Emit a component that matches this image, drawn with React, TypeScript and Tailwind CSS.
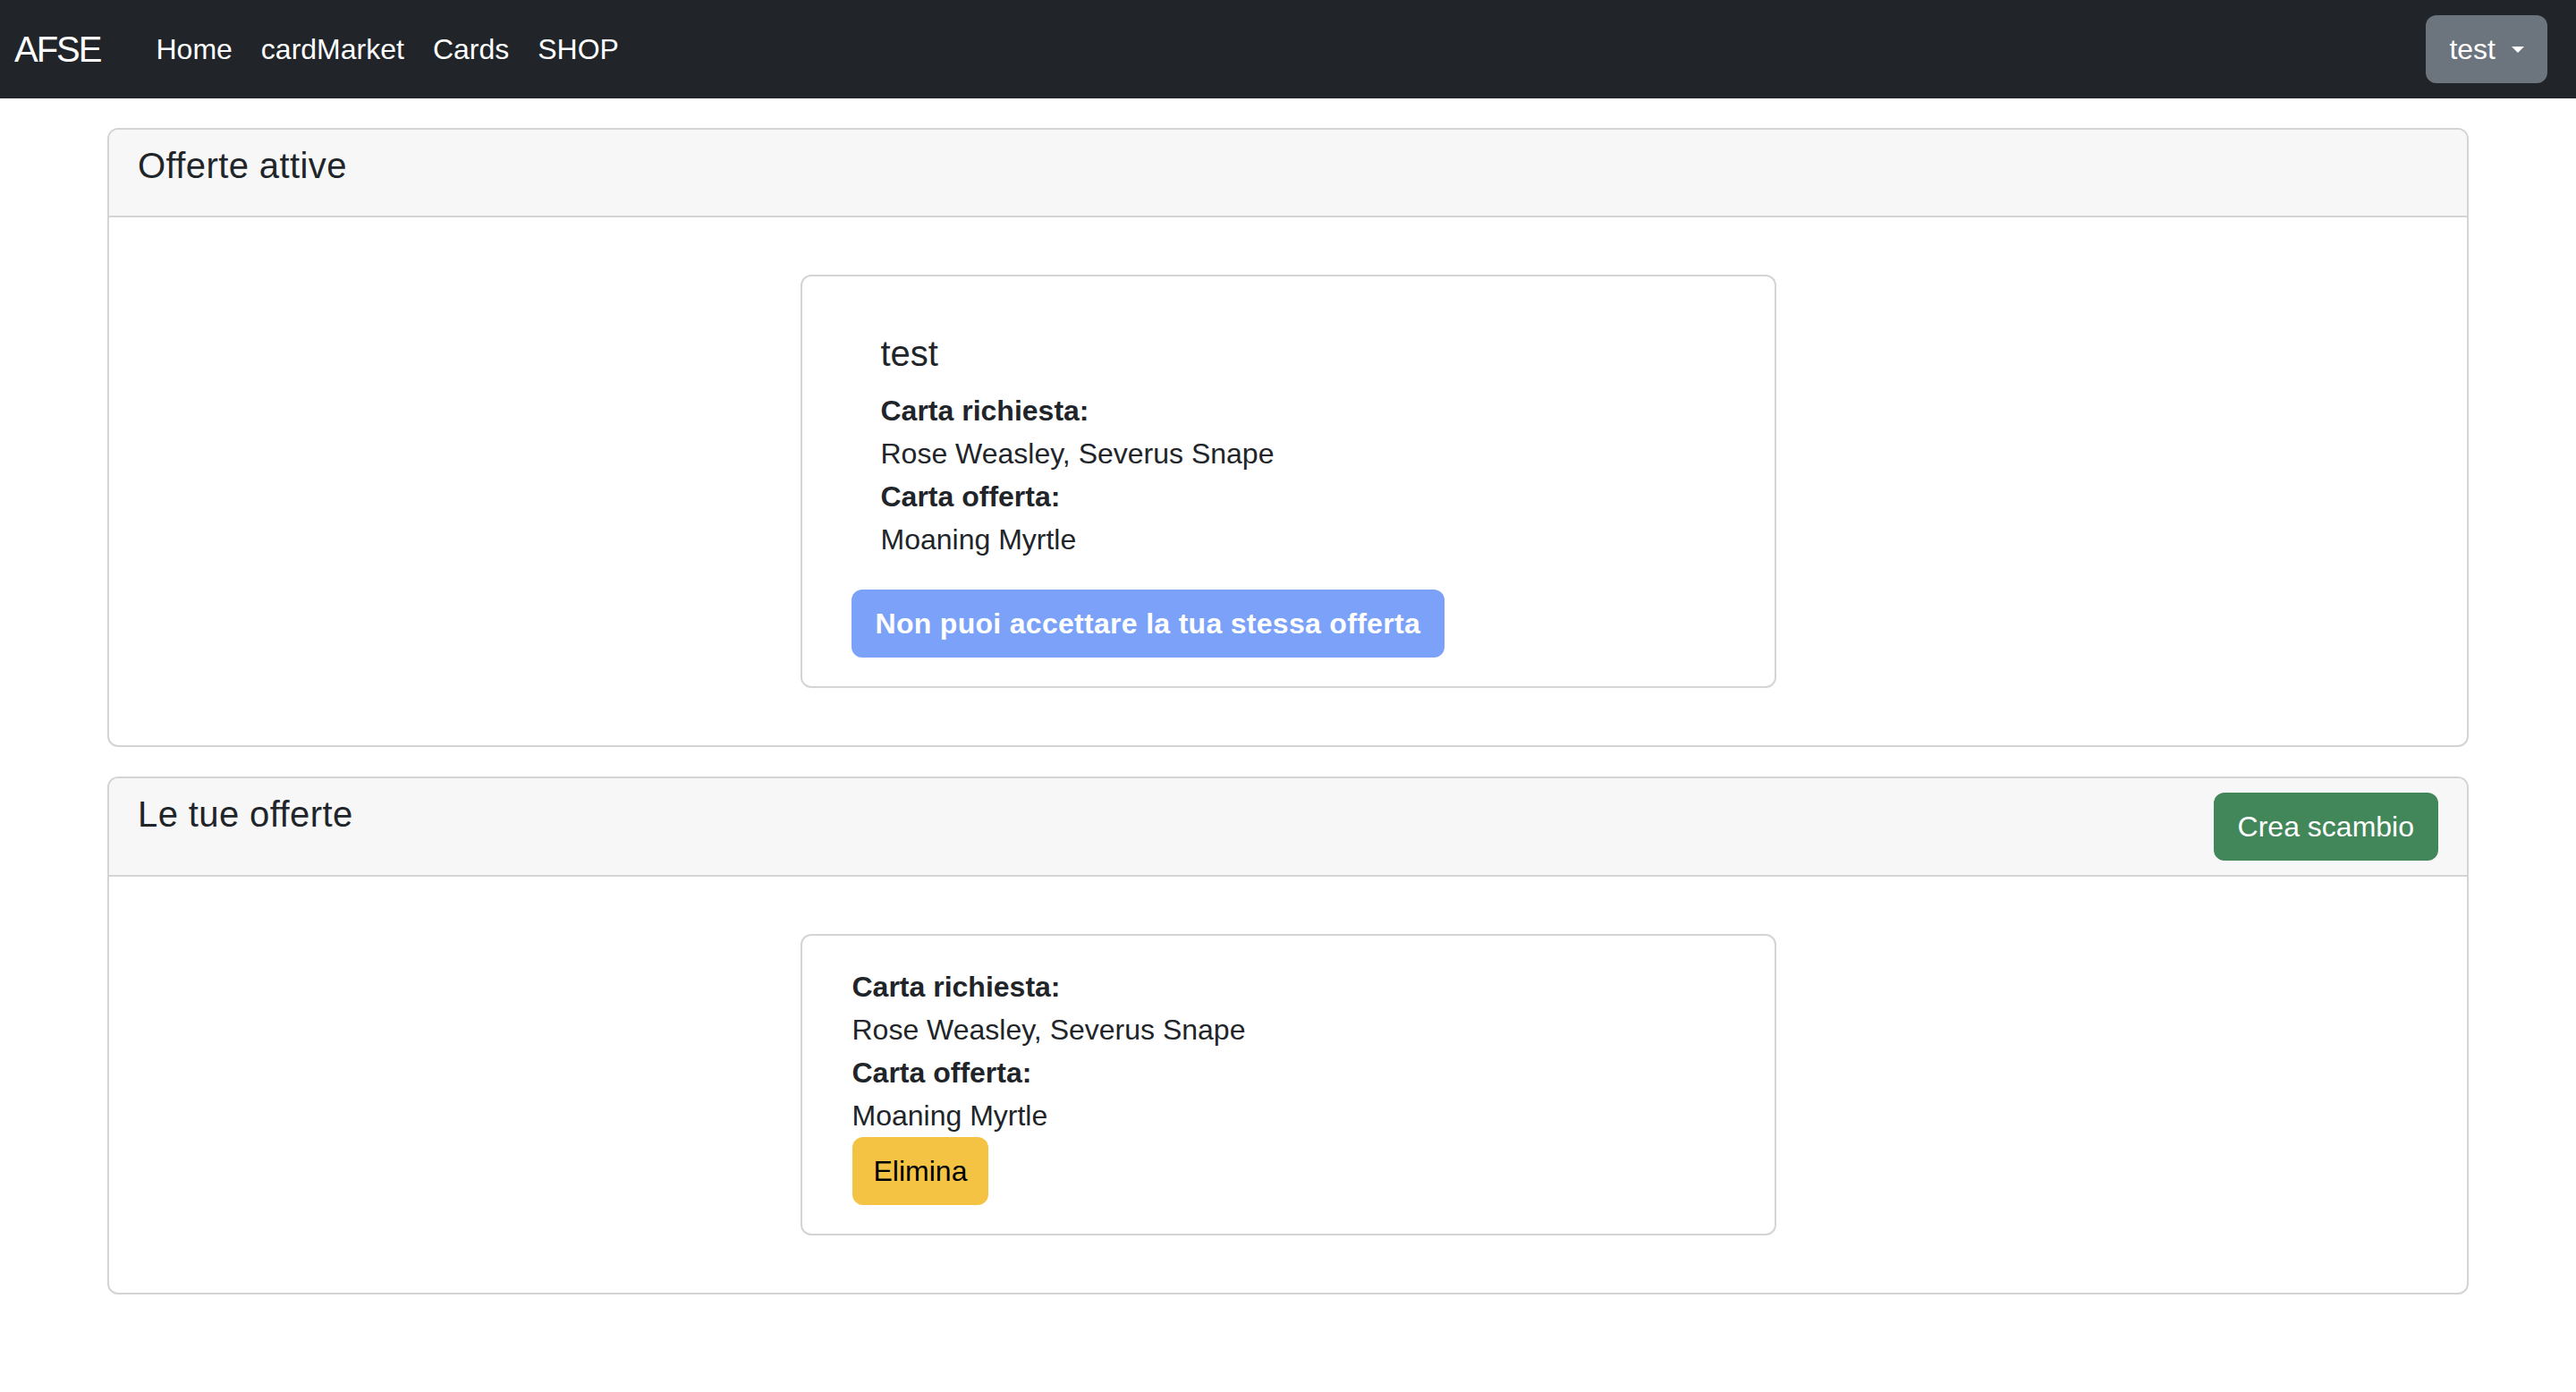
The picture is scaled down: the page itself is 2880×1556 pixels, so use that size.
import React from 'react';

interface Offer {
    id: number;
    owner: string;
    requested: string[];
    offered: string[];
}

const activeOffers: Offer[] = [
    { id: 1, owner: 'test', requested: ['Rose Weasley', 'Severus Snape'], offered: ['Moaning Myrtle'] },
];

const myOffers: Offer[] = [
    { id: 1, owner: 'test', requested: ['Rose Weasley', 'Severus Snape'], offered: ['Moaning Myrtle'] },
];

const currentUser = 'test';

const OfferLines = ({ offer }: { offer: Offer }) => (
    <>
        <p className="font-bold leading-[48px]">Carta richiesta:</p>
        <p className="leading-[48px]">{offer.requested.join(', ')}</p>
        <p className="font-bold leading-[48px]">Carta offerta:</p>
        <p className="leading-[48px]">{offer.offered.join(', ')}</p>
    </>
);

const App = () => {
    const links = ['Home', 'cardMarket', 'Cards', 'SHOP'];

    return (
        <div className="min-h-screen bg-white text-[#212529] text-[32px] font-['Liberation_Sans',Arial,sans-serif]">
            {/* Navbar */}
            <nav className="h-[110px] bg-[#212529] flex items-center pl-[16px] pr-[32px]">
                <span className="text-white text-[40px] tracking-[-2px] mr-[46px]">AFSE</span>
                <div className="flex">
                    {links.map((link) => (
                        <a key={link} className="px-[16px] text-white cursor-pointer">
                            {link}
                        </a>
                    ))}
                </div>
                <button className="ml-auto h-[76px] px-[26px] rounded-[12px] bg-[#6c757d] text-white flex items-center gap-[18px]">
                    {currentUser}
                    <span className="w-0 h-0 border-x-[7px] border-x-transparent border-t-[7px] border-t-white"></span>
                </button>
            </nav>

            <div className="px-[120px] pt-[33px]">
                {/* Offerte attive */}
                <div className="border-2 border-[#d4d4d4] rounded-[12px] overflow-hidden">
                    <div className="bg-[#f7f7f7] border-b-2 border-[#d4d4d4] px-[32px] py-[16px]">
                        <h5 className="text-[40px] leading-[48px] tracking-[0.4px] mb-[16px]">Offerte attive</h5>
                    </div>
                    <div className="py-[64px]">
                        {activeOffers.map((offer) => (
                            <div key={offer.id} className="w-[1091px] mx-auto border-2 border-[#d4d4d4] rounded-[12px] px-[55px] pt-[30px] pb-[32px]">
                                <div className="px-[33px] py-[32px]">
                                    <h5 className="text-[40px] leading-[48px] mb-[16px]">{offer.owner}</h5>
                                    <OfferLines offer={offer} />
                                </div>
                                <button
                                    disabled={offer.owner === currentUser}
                                    className="h-[76px] px-[27px] rounded-[12px] bg-[#7ba2f8] text-white font-bold tracking-[0.3px]"
                                >
                                    Non puoi accettare la tua stessa offerta
                                </button>
                            </div>
                        ))}
                    </div>
                </div>

                {/* Le tue offerte */}
                <div className="mt-[33px] border-2 border-[#d4d4d4] rounded-[12px] overflow-hidden">
                    <div className="bg-[#f7f7f7] border-b-2 border-[#d4d4d4] px-[32px] py-[16px] flex justify-between items-start">
                        <h5 className="text-[40px] leading-[48px] tracking-[0.4px]">Le tue offerte</h5>
                        <button className="h-[76px] px-[27px] rounded-[12px] bg-[#428759] text-white">Crea scambio</button>
                    </div>
                    <div className="py-[64px]">
                        {myOffers.map((offer) => (
                            <div key={offer.id} className="w-[1091px] mx-auto border-2 border-[#d4d4d4] rounded-[12px] px-[56px] pt-[33px] pb-[32px]">
                                <OfferLines offer={offer} />
                                <button className="h-[76px] px-[24px] rounded-[12px] bg-[#f4c344] text-black">Elimina</button>
                            </div>
                        ))}
                    </div>
                </div>
            </div>
        </div>
    );
};

export default App;
